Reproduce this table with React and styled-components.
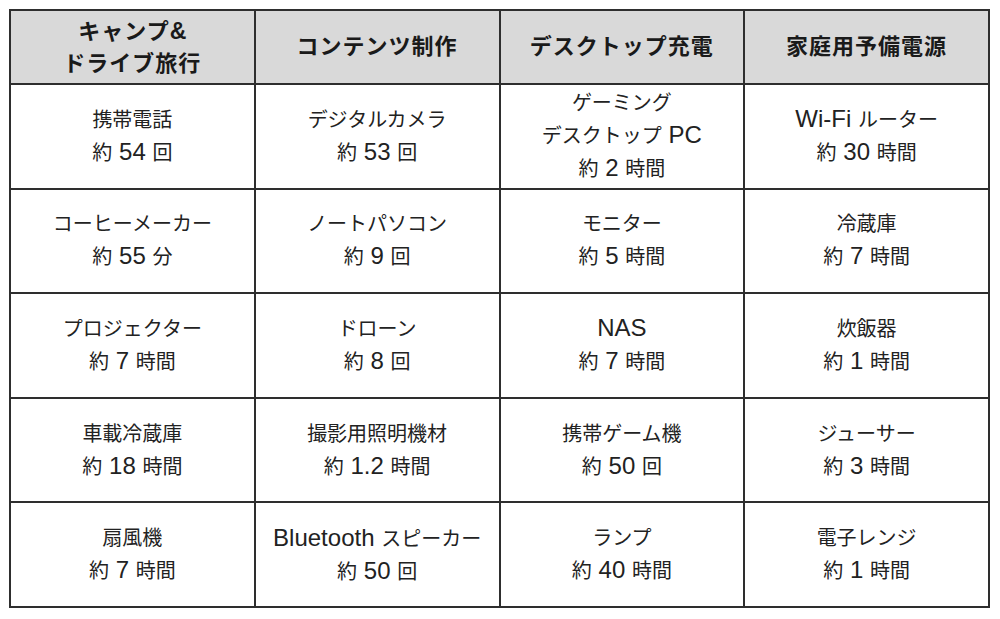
import React from 'react';
import styled, { createGlobalStyle } from 'styled-components';

const headers = [
  ['キャンプ&', 'ドライブ旅行'],
  ['コンテンツ制作'],
  ['デスクトップ充電'],
  ['家庭用予備電源'],
];

const rows = [
  [
    ['携帯電話', '約 54 回'],
    ['デジタルカメラ', '約 53 回'],
    ['ゲーミング', 'デスクトップ PC', '約 2 時間'],
    ['Wi-Fi ルーター', '約 30 時間'],
  ],
  [
    ['コーヒーメーカー', '約 55 分'],
    ['ノートパソコン', '約 9 回'],
    ['モニター', '約 5 時間'],
    ['冷蔵庫', '約 7 時間'],
  ],
  [
    ['プロジェクター', '約 7 時間'],
    ['ドローン', '約 8 回'],
    ['NAS', '約 7 時間'],
    ['炊飯器', '約 1 時間'],
  ],
  [
    ['車載冷蔵庫', '約 18 時間'],
    ['撮影用照明機材', '約 1.2 時間'],
    ['携帯ゲーム機', '約 50 回'],
    ['ジューサー', '約 3 時間'],
  ],
  [
    ['扇風機', '約 7 時間'],
    ['Bluetooth スピーカー', '約 50 回'],
    ['ランプ', '約 40 時間'],
    ['電子レンジ', '約 1 時間'],
  ],
];

const GlobalStyle = createGlobalStyle`
  html, body {
    margin: 0;
    padding: 0;
    background: #ffffff;
  }
  body {
    font-family: "Liberation Sans", "Noto Sans CJK JP", sans-serif;
    color: #222;
  }
`;

const Page = styled.div`
  padding: 9px 10px 0 9px;
`;

const Table = styled.table`
  width: 981px;
  border-collapse: collapse;
  table-layout: fixed;
  border: 2px solid #2e2e2e;
`;

const HeadRow = styled.tr`
  height: 74px;
  background: #d9d9d9;
`;

const BodyRow = styled.tr`
  height: 104.6px;
`;

const HeadCell = styled.th`
  border: 2px solid #2e2e2e;
  font-size: 22px;
  font-weight: 700;
  line-height: 32px;
  color: #1a1a1a;
  text-align: center;
  vertical-align: middle;
  padding: 0;
  letter-spacing: 1px;
`;

const Cell = styled.td`
  border: 2px solid #2e2e2e;
  font-size: 20px;
  line-height: 32px;
  color: #222;
  text-align: center;
  vertical-align: middle;
  padding: 0;
`;

const Line = styled.div`
  white-space: nowrap;
`;

// latin runs render larger than the kana/kanji in the reference
const Latin = styled.span`
  font-size: ${p => (p.$head ? '1.05em' : '1.2em')};
  letter-spacing: 0;
`;

const renderText = (text, head) =>
  text.split(/([\x20-\x7e]+)/).map((part, i) =>
    /[\x20-\x7e]/.test(part) ? (
      <Latin key={i} $head={head}>{part}</Latin>
    ) : (
      part
    )
  );

export default function App() {
  return (
    <Page>
      <GlobalStyle />
      <Table>
        <thead>
          <HeadRow>
            {headers.map((h, i) => (
              <HeadCell key={i}>
                {h.map((t, j) => (
                  <Line key={j}>{renderText(t, true)}</Line>
                ))}
              </HeadCell>
            ))}
          </HeadRow>
        </thead>
        <tbody>
          {rows.map((r, i) => (
            <BodyRow key={i}>
              {r.map((c, j) => (
                <Cell key={j}>
                  {c.map((t, k) => (
                    <Line key={k}>{renderText(t, false)}</Line>
                  ))}
                </Cell>
              ))}
            </BodyRow>
          ))}
        </tbody>
      </Table>
    </Page>
  );
}
